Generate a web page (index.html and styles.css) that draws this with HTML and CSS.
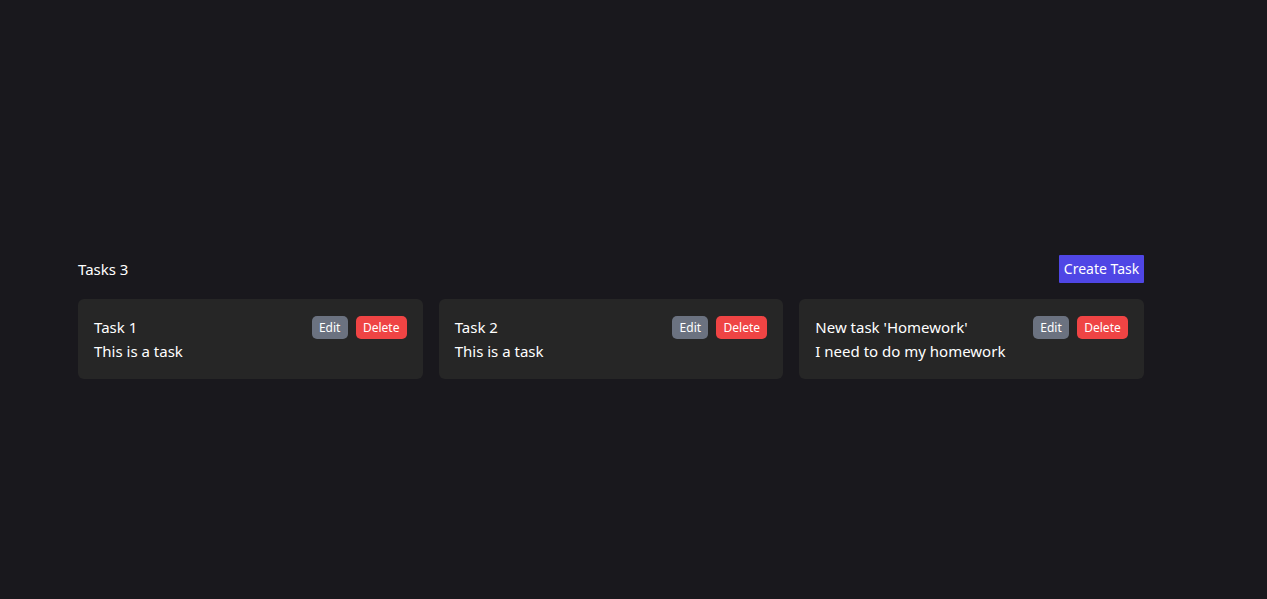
FILE: index.html
```html
<!DOCTYPE html>
<html lang="en">
<head>
<meta charset="utf-8">
<title>Tasks</title>
<link rel="stylesheet" href="styles.css">
</head>
<body>
<main class="page">
  <section class="tasks">
    <header class="tasks-header">
      <h1 class="tasks-title">Tasks 3</h1>
      <button class="btn-create">Create Task</button>
    </header>
    <div class="task-grid">
      <article class="card">
        <div class="card-top">
          <h2 class="card-title">Task 1</h2>
          <div class="card-actions">
            <button class="btn btn-edit">Edit</button>
            <button class="btn btn-delete">Delete</button>
          </div>
        </div>
        <p class="card-desc">This is a task</p>
      </article>
      <article class="card">
        <div class="card-top">
          <h2 class="card-title">Task 2</h2>
          <div class="card-actions">
            <button class="btn btn-edit">Edit</button>
            <button class="btn btn-delete">Delete</button>
          </div>
        </div>
        <p class="card-desc">This is a task</p>
      </article>
      <article class="card">
        <div class="card-top">
          <h2 class="card-title">New task 'Homework'</h2>
          <div class="card-actions">
            <button class="btn btn-edit">Edit</button>
            <button class="btn btn-delete">Delete</button>
          </div>
        </div>
        <p class="card-desc">I need to do my homework</p>
      </article>
    </div>
  </section>
</main>
</body>
</html>
```

FILE: styles.css
```css
* { box-sizing: border-box; }
html, body {
  margin: 0;
  height: 100%;
}
body {
  background: #19181d;
  color: #ffffff;
  font-family: "Noto Sans", "Open Sans", "Liberation Sans", sans-serif;
  font-size: 16px;
  line-height: 24px;
}
.page {
  padding-top: 255px;
  padding-left: 78px;
}
.tasks {
  width: 1066px;
  display: flex;
  flex-direction: column;
  gap: 16px;
}
.tasks-header {
  display: flex;
  justify-content: space-between;
  align-items: center;
  height: 28px;
}
.tasks-title {
  margin: 0;
  font-size: 15px;
  font-weight: 400;
}
.btn-create {
  font-family: inherit;
  font-size: 14px;
  color: #fff;
  background: #4f46e5;
  border: none;
  border-radius: 1px;
  height: 28px;
  width: 85px;
  padding: 0;
  line-height: 28px;
  text-align: center;
}
.task-grid {
  display: grid;
  grid-template-columns: repeat(3, 1fr);
  gap: 16px;
}
.card {
  background: #262626;
  border-radius: 6px;
  padding: 16px;
  height: 80px;
}
.card-top {
  display: flex;
  justify-content: space-between;
  align-items: center;
  height: 24px;
}
.card-title {
  margin: 0;
  font-size: 15px;
  font-weight: 400;
}
.card-actions {
  display: flex;
  gap: 8px;
}
.btn {
  font-family: inherit;
  font-size: 12px;
  line-height: 23px;
  height: 23px;
  color: #fff;
  border: none;
  border-radius: 5px;
  padding: 0;
  text-align: center;
}
.btn-edit { background: #6b7280; width: 36px; }
.btn-delete { background: #ef4444; width: 51px; }
.card-desc {
  margin: 0;
  font-size: 15px;
  line-height: 24px;
}
```
